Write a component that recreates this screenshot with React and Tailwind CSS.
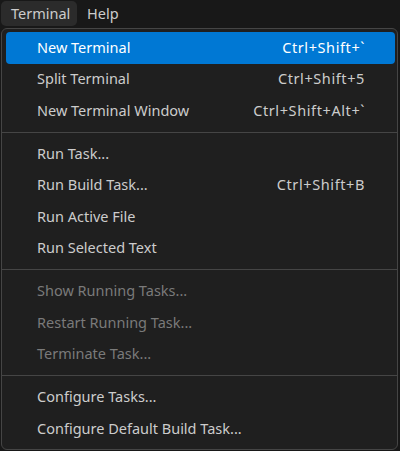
import React from "react";

const groups = [
  [
    { label: "New Terminal", key: "Ctrl+Shift+`", active: true },
    { label: "Split Terminal", key: "Ctrl+Shift+5" },
    { label: "New Terminal Window", key: "Ctrl+Shift+Alt+`" },
  ],
  [
    { label: "Run Task..." },
    { label: "Run Build Task...", key: "Ctrl+Shift+B" },
    { label: "Run Active File" },
    { label: "Run Selected Text" },
  ],
  [
    { label: "Show Running Tasks...", disabled: true },
    { label: "Restart Running Task...", disabled: true },
    { label: "Terminate Task...", disabled: true },
  ],
  [{ label: "Configure Tasks..." }, { label: "Configure Default Build Task..." }],
];

function Item({ item }) {
  const color = item.active
    ? "bg-[#0078d4] text-white"
    : item.disabled
    ? "text-[#7a7a7a]"
    : "text-[#cccccc]";
  return (
    <div className={`ml-[4px] mr-[2px] h-[31.5px] flex items-center justify-between pl-[31px] pr-[30px] rounded-[4px] ${color}`}>
      <span>{item.label}</span>
      {item.key && (
        <span className={`tracking-[0.6px] ${item.active ? "" : "text-[#cccccc]"}`}>{item.key}</span>
      )}
    </div>
  );
}

export default function App() {
  return (
    <div
      className="w-[400px] h-[451px] bg-[#181818] overflow-hidden text-[14.5px]"
      style={{ fontFamily: '"Segoe UI", "Noto Sans", sans-serif' }}
    >
      <div className="h-[28px] flex items-start pt-[1px] pl-[1px] text-[#cccccc]">
        <div className="h-[25px] w-[76px] pl-[10px] flex items-center rounded-[5px] bg-[#2b2b2b]">Terminal</div>
        <div className="h-[25px] pl-[10px] flex items-center">Help</div>
      </div>
      <div className="ml-[1px] w-[397px] h-[422px] border border-[#454545] rounded-[6px] bg-[#1f1f1f] py-[3px] overflow-hidden">
        {groups.map((g, gi) => (
          <React.Fragment key={gi}>
            {gi > 0 && (
              <div className="h-[11.5px] flex items-center">
                <div className="w-full h-px bg-[#454545]" />
              </div>
            )}
            {g.map((it) => (
              <Item key={it.label} item={it} />
            ))}
          </React.Fragment>
        ))}
      </div>
    </div>
  );
}
